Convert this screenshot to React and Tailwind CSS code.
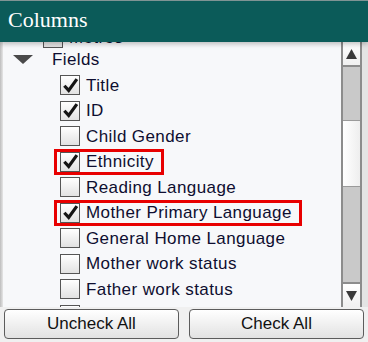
import React from "react";

const items = [
  { label: "Title", checked: true },
  { label: "ID", checked: true },
  { label: "Child Gender", checked: false },
  { label: "Ethnicity", checked: true, marked: true },
  { label: "Reading Language", checked: false },
  { label: "Mother Primary Language", checked: true, marked: true },
  { label: "General Home Language", checked: false },
  { label: "Mother work status", checked: false },
  { label: "Father work status", checked: false },
  { label: "Father Primary Language", checked: false },
];

function Box({ checked }) {
  return (
    <span className="w-[20px] h-[20px] shrink-0 border border-[#555] bg-gradient-to-b from-[#ffffff] to-[#e2e2e2] flex items-center justify-center">
      {checked && (
        <svg width="17" height="17" viewBox="0 0 16 16">
          <path d="M2.2 8.2 L6.3 12.6 L14 2" fill="none" stroke="#151515" strokeWidth="3" />
        </svg>
      )}
    </span>
  );
}

function Row({ item, indent = "pl-[51px]", h = "h-[25.5px]" }) {
  return (
    <div className={`${h} ${indent} flex items-center`}>
      <span
        className={`inline-flex items-center gap-[6px] h-[26px] pl-[3px] pr-[7px] border-[3px] ${
          item.marked ? "border-[#e80000]" : "border-transparent"
        }`}
      >
        <Box checked={item.checked} />
        <span>{item.label}</span>
      </span>
    </div>
  );
}

export default function App() {
  return (
    <div className="w-[368px] h-[342px] flex flex-col bg-[#eeeeee] overflow-hidden font-['Liberation_Sans',Arial,sans-serif]">
      <div className="h-[42px] shrink-0 bg-[#0b5b59] border-t border-[#7f9494] flex items-center px-[8px] relative z-10 shadow-[0_2px_5px_rgba(0,0,0,0.25)]">
        <span className="text-white text-[22px] font-['Liberation_Serif','Times_New_Roman',serif] leading-none pb-[4px]">
          Columns
        </span>
      </div>

      <div className="flex h-[265px] shrink-0">
        <div className="w-[3px] bg-gradient-to-r from-[#bdbdbd] to-[#e6e6e6]" />
        <div className="flex-1 bg-[#f7f8fa] overflow-hidden text-[17px] tracking-[0.4px] text-[#0e0e30] font-['Liberation_Sans',Arial,sans-serif]">
          <div className="mt-[-13.5px]">
            <Row item={{ label: "Metros", checked: false }} indent="pl-[34px]" h="h-[18.5px]" />
            <div className="h-[25.5px] flex items-center">
              <svg width="20" height="10" viewBox="0 0 20 10" className="ml-[10px]">
                <path d="M0 0 L20 0 L10 9 Z" fill="#4a4a4a" />
              </svg>
              <span className="ml-[19px]">Fields</span>
            </div>
            {items.map((item) => (
              <Row key={item.label} item={item} />
            ))}
          </div>
        </div>
        <div className="w-[21px] flex flex-col border-x-2 border-[#8c8c8c] bg-[#c9c9c9]">
          <div className="h-[25px] bg-gradient-to-b from-white to-[#f0f0f0] border-b-2 border-[#8c8c8c] flex items-center justify-center">
            <svg width="11" height="10" viewBox="0 0 11 10">
              <path d="M5.5 0 L11 10 L0 10 Z" fill="#3a3a3a" />
            </svg>
          </div>
          <div className="h-[53px]" />
          <div className="h-[67px] bg-gradient-to-r from-white to-[#eeeeee] border-y border-[#9a9a9a]" />
          <div className="flex-1" />
          <div className="h-[25px] bg-gradient-to-b from-white to-[#f0f0f0] border-t-2 border-[#8c8c8c] flex items-center justify-center">
            <svg width="11" height="10" viewBox="0 0 11 10">
              <path d="M0 0 L11 0 L5.5 10 Z" fill="#3a3a3a" />
            </svg>
          </div>
        </div>
        <div className="w-[6px] bg-[#e4e4e4]" />
      </div>

      <div className="flex-1 flex gap-[10px] px-[4px] pt-[2px] pb-[3px] bg-[#f0f0f0]">
        <button className="flex-1 rounded-[4px] border border-[#5c5c5c] bg-gradient-to-b from-white to-[#e2e2e2] text-[17px] text-[#111]">
          Uncheck All
        </button>
        <button className="flex-1 rounded-[4px] border border-[#5c5c5c] bg-gradient-to-b from-white to-[#e2e2e2] text-[17px] text-[#111]">
          Check All
        </button>
      </div>
    </div>
  );
}
